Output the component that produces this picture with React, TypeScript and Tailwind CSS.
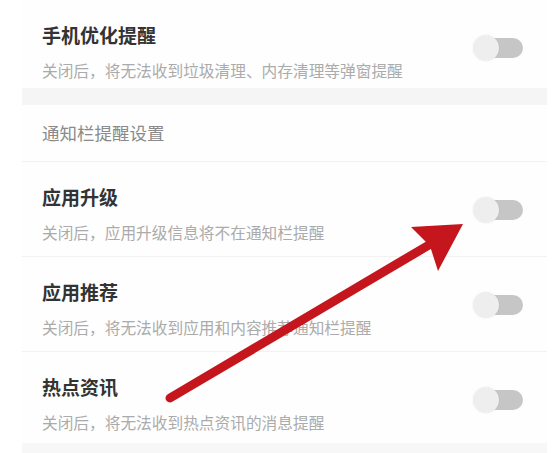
import React from "react";

function Toggle() {
  return (
    <div className="relative w-[50px] h-[26px] shrink-0">
      <div className="absolute left-[4px] right-0 top-[3px] h-[20px] rounded-full bg-[#c6c6c6]" />
      <div className="absolute left-0 top-0 w-[26px] h-[26px] rounded-full bg-[#eeeeee] shadow-[0_0_3px_rgba(0,0,0,0.06)]" />
    </div>
  );
}

function Row({ title, sub, h, border = true }: { title: string; sub: string; h: string; border?: boolean }) {
  return (
    <div className={`flex justify-between pl-[20px] pr-[24px] ${h} ${border ? "border-b border-[#f2f2f2]" : ""}`}>
      <div className="flex flex-col pt-[22px]">
        <div className="text-[19px] leading-[26px] font-bold text-[#333333]">{title}</div>
        <div className="mt-[12px] text-[15.7px] leading-[22px] text-[#ababab]">{sub}</div>
      </div>
      <div className="mt-[35px]">
        <Toggle />
      </div>
    </div>
  );
}

export default function App() {
  return (
    <div
      className="relative w-[558px] h-[453px] bg-white overflow-hidden"
      style={{ fontFamily: '"Noto Sans CJK SC", "Noto Sans", sans-serif' }}
    >
      <div className="ml-[22px] mr-[11px] flex flex-col bg-[#fefefe]">
        <Row title="手机优化提醒" sub="关闭后，将无法收到垃圾清理、内存清理等弹窗提醒" h="h-[88px]" border={false} />
        <div className="h-[17px] bg-[#f5f5f5]" />
        <div className="h-[57px] flex items-center pl-[20px] border-b border-[#f2f2f2]">
          <span className="text-[17.5px] leading-[24px] text-[#8a8a8a]">通知栏提醒设置</span>
        </div>
        <Row title="应用升级" sub="关闭后，应用升级信息将不在通知栏提醒" h="h-[95px]" />
        <Row title="应用推荐" sub="关闭后，将无法收到应用和内容推荐通知栏提醒" h="h-[95px]" />
        <Row title="热点资讯" sub="关闭后，将无法收到热点资讯的消息提醒" h="h-[91px]" border={false} />
        <div className="h-[20px] bg-[#f7f7f7]" />
      </div>
      <svg className="absolute left-0 top-0" width="558" height="453" viewBox="0 0 558 453">
        <line x1="170" y1="398" x2="434" y2="242" stroke="#c4161c" strokeWidth="9" strokeLinecap="round" />
        <polygon points="463,224 411,227 430,246 438,271" fill="#c4161c" />
      </svg>
    </div>
  );
}
